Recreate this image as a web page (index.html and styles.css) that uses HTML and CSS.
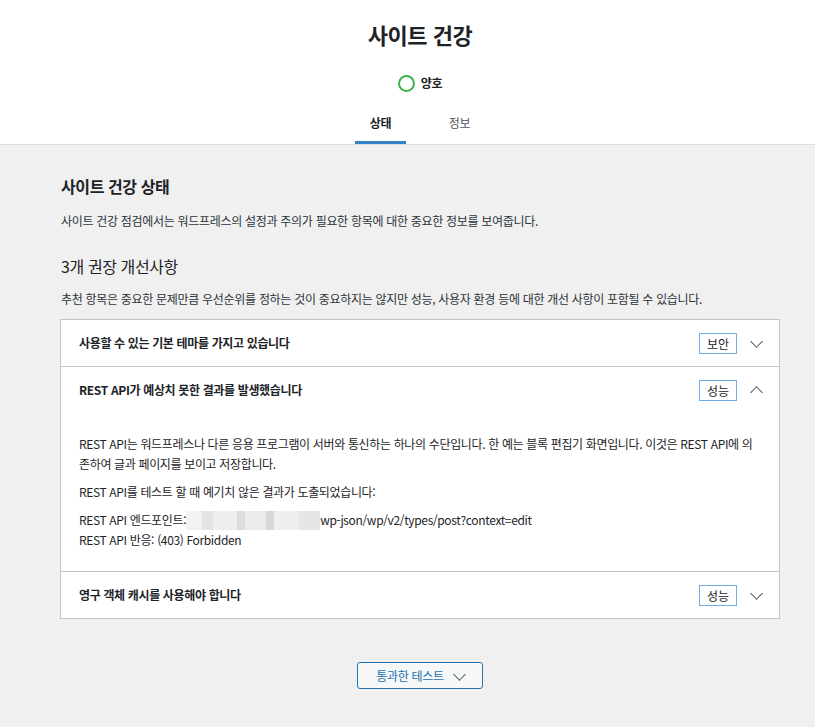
FILE: index.html
```html
<!DOCTYPE html>
<html lang="ko">
<head>
  <meta charset="UTF-8">
  <meta name="viewport" content="width=device-width, initial-scale=1.0">
  <title>사이트 건강</title>
  <link rel="stylesheet" href="styles.css">
</head>
<body>
  <div class="header">
    <h1>사이트 건강</h1>
    <div class="status">
      <span class="status-ring"></span>
      <span class="status-label">양호</span>
    </div>
    <nav class="tabs">
      <a class="tab active">상태</a>
      <a class="tab">정보</a>
    </nav>
  </div>

  <div class="main">
    <h2>사이트 건강 상태</h2>
    <p class="intro">사이트 건강 점검에서는 워드프레스의 설정과 주의가 필요한 항목에 대한 중요한 정보를 보여줍니다.</p>

    <h3>3개 권장 개선사항</h3>
    <p class="intro">추천 항목은 중요한 문제만큼 우선순위를 정하는 것이 중요하지는 않지만 성능, 사용자 환경 등에 대한 개선 사항이 포함될 수 있습니다.</p>

    <div class="accordion">
      <div class="acc-item">
        <div class="acc-head">
          <span class="acc-title">사용할 수 있는 기본 테마를 가지고 있습니다</span>
          <span class="badge">보안</span>
          <span class="chevron down"></span>
        </div>
      </div>
      <div class="acc-item">
        <div class="acc-head">
          <span class="acc-title">REST API가 예상치 못한 결과를 발생했습니다</span>
          <span class="badge">성능</span>
          <span class="chevron up"></span>
        </div>
        <div class="acc-panel">
          <p>REST API는 워드프레스나 다른 응용 프로그램이 서버와 통신하는 하나의 수단입니다. 한 예는 블록 편집기 화면입니다. 이것은 REST API에 의존하여 글과 페이지를 보이고 저장합니다.</p>
          <p>REST API를 테스트 할 때 예기치 않은 결과가 도출되었습니다:</p>
          <p>REST API 엔드포인트: <span class="blurred"></span>wp-json/wp/v2/types/post?context=edit<br>REST API 반응: (403) Forbidden</p>
        </div>
      </div>
      <div class="acc-item">
        <div class="acc-head">
          <span class="acc-title">영구 객체 캐시를 사용해야 합니다</span>
          <span class="badge">성능</span>
          <span class="chevron down"></span>
        </div>
      </div>
    </div>

    <div class="passed">
      <button class="passed-btn">통과한 테스트 <span class="chevron down small"></span></button>
    </div>
  </div>
</body>
</html>
```

FILE: styles.css
```css
* {
  margin: 0;
  padding: 0;
  box-sizing: border-box;
}

body {
  background: #f0f0f1;
  color: #1d2327;
  font-family: "Noto Sans CJK KR", "Noto Sans", sans-serif;
  font-size: 13px;
  line-height: 1.5;
}

.header {
  background: #fff;
  border-bottom: 1px solid #dcdcde;
  text-align: center;
  padding: 12px 0 0 25px;
}

h1 {
  font-size: 22px;
  font-weight: 700;
  line-height: 44px;
  letter-spacing: -0.5px;
}

.status {
  display: flex;
  justify-content: center;
  align-items: center;
  gap: 6px;
  margin-top: 16px;
  height: 22px;
}

.status-ring {
  width: 17px;
  height: 17px;
  border: 2px solid #3db54a;
  border-radius: 50%;
}

.status-label {
  font-weight: 700;
  font-size: 12px;
  letter-spacing: -0.3px;
}

.tabs {
  display: flex;
  justify-content: center;
  margin-top: 20px;
  gap: 28px;
}

.tab {
  width: 51px;
  padding: 0 0 12px;
  color: #50575e;
  font-size: 12px;
  letter-spacing: -0.3px;
}

.tab.active {
  color: #1d2327;
  font-weight: 700;
  box-shadow: inset 0 -3px #3582c4;
}

.main {
  padding: 27px 35px 40px 60px;
}

h2 {
  font-size: 16px;
  font-weight: 700;
  line-height: 28px;
  padding-left: 1px;
  letter-spacing: -0.4px;
}

h3 {
  font-size: 16px;
  font-weight: 400;
  line-height: 28px;
  margin-top: 22px;
  padding-left: 1px;
  letter-spacing: -0.4px;
}

.intro {
  font-size: 12px;
  letter-spacing: -0.3px;
  color: #2c3338;
  margin-top: 12px;
  padding-left: 1px;
}

h3 + .intro {
  margin-top: 10px;
}

.accordion {
  margin-top: 11px;
  width: 720px;
  background: #fff;
  border: 1px solid #c3c4c7;
}

.acc-item + .acc-item {
  border-top: 1px solid #c3c4c7;
}

.acc-head {
  display: flex;
  align-items: center;
  height: 46px;
  padding: 0 13px 0 18px;
}

.acc-title {
  flex: 1;
  font-weight: 700;
  font-size: 12px;
  letter-spacing: -0.35px;
}

.badge {
  border: 1px solid #72aee6;
  padding: 0 7px;
  height: 21px;
  line-height: 19px;
  font-size: 12px;
  margin-right: 10px;
  min-width: 38px;
  text-align: center;
}

.chevron {
  width: 14px;
  height: 14px;
  margin: 0 3px 0 2px;
  position: relative;
}

.chevron::before {
  content: "";
  position: absolute;
  left: 3px;
  width: 8px;
  height: 8px;
  border-right: 1.2px solid #50575e;
  border-bottom: 1.2px solid #50575e;
}

.chevron.down::before {
  top: 1px;
  transform: rotate(45deg);
}

.chevron.up::before {
  top: 5px;
  transform: rotate(-135deg);
}

.acc-panel {
  padding: 21px 24px 21px 18px;
  font-size: 12px;
  letter-spacing: -0.35px;
  line-height: 20px;
}

.acc-panel p + p {
  margin-top: 8px;
}

.blurred {
  display: inline-block;
  width: 134px;
  height: 19px;
  margin-left: -3px;
  vertical-align: -5px;
  background:
    linear-gradient(90deg, #f2f2f2 0 12%, #e4e4e4 12% 20%, #efefef 20% 38%, #dcdcdc 38% 44%, #ececec 44% 60%, #d8d8d8 60% 66%, #eeeeee 66% 84%, #e6e6e6 84% 100%);
}

.passed {
  display: flex;
  justify-content: center;
  margin-top: 43px;
}

.passed-btn {
  display: flex;
  align-items: center;
  gap: 8px;
  height: 27px;
  padding: 0 16px 0 18px;
  background: #f6f7f7;
  border: 1px solid #2271b1;
  border-radius: 3px;
  color: #2271b1;
  font-family: inherit;
  font-size: 12px;
  letter-spacing: -0.3px;
}

.chevron.small {
  margin: 0;
}
```
